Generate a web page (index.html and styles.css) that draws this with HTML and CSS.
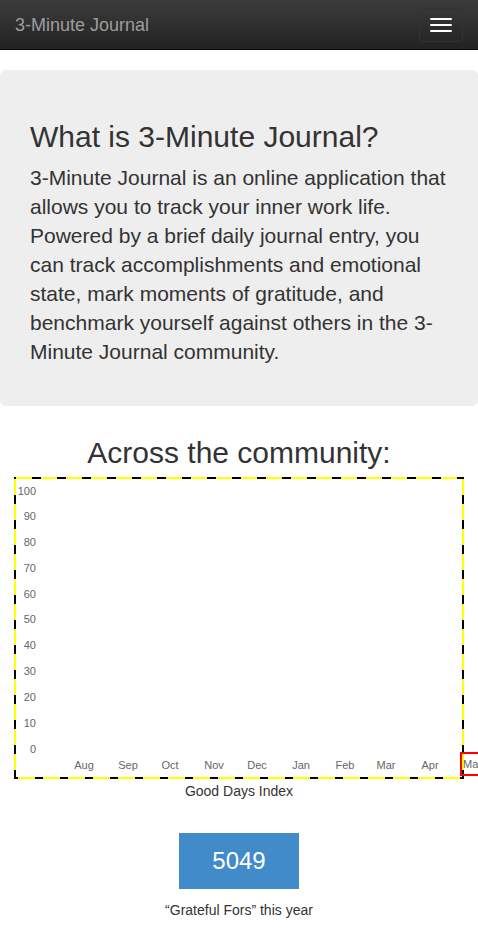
FILE: index.html
```html
<!DOCTYPE html>
<html>
<head>
<meta charset="utf-8">
<link rel="stylesheet" href="styles.css">
</head>
<body>
<nav class="navbar">
  <span class="brand">3-Minute Journal</span>
  <button class="toggle"><span class="bar"></span><span class="bar"></span><span class="bar"></span></button>
</nav>
<section class="jumbotron">
  <h1 class="jt-title">What is 3-Minute Journal?</h1>
  <p class="jt-text">3-Minute Journal is an online application that allows you to track your inner work life. Powered by a brief daily journal entry, you can track accomplishments and emotional state, mark moments of gratitude, and benchmark yourself against others in the 3-Minute Journal community.</p>
</section>
<h2 class="section-title">Across the community:</h2>
<div class="chart-wrap">
  <div class="chart">
    <svg class="chart-svg" width="446" height="298" viewBox="0 0 446 298">
      <g class="ylab" text-anchor="end">
        <text x="20" y="16">100</text>
        <text x="20" y="41">90</text>
        <text x="20" y="67">80</text>
        <text x="20" y="93">70</text>
        <text x="20" y="119">60</text>
        <text x="20" y="144">50</text>
        <text x="20" y="170">40</text>
        <text x="20" y="196">30</text>
        <text x="20" y="222">20</text>
        <text x="20" y="248">10</text>
        <text x="20" y="274">0</text>
      </g>
      <g class="xlab" text-anchor="middle">
        <text x="68" y="290">Aug</text>
        <text x="112" y="290">Sep</text>
        <text x="154" y="290">Oct</text>
        <text x="198" y="290">Nov</text>
        <text x="241" y="290">Dec</text>
        <text x="285" y="290">Jan</text>
        <text x="329" y="290">Feb</text>
        <text x="370" y="290">Mar</text>
        <text x="414" y="290">Apr</text>
      </g>
    </svg>
    <div class="hl-label">May</div>
  </div>
  <div class="chart-caption">Good Days Index</div>
</div>
<div class="stat">
  <div class="stat-box">5049</div>
  <div class="stat-caption">“Grateful Fors” this year</div>
</div>
</body>
</html>
```
FILE: styles.css
```css
html, body {
  margin: 0;
  padding: 0;
}
body {
  font-family: "Liberation Sans", Arial, sans-serif;
  color: #333;
  background: #fff;
  overflow-x: hidden;
  width: 478px;
}
.navbar {
  height: 49px;
  border-bottom: 1px solid #080808;
  background: linear-gradient(to bottom, #3c3c3c 0%, #222 100%);
  display: flex;
  align-items: center;
  justify-content: space-between;
  padding: 0 15px;
  box-sizing: content-box;
}
.brand {
  font-size: 18px;
  line-height: 20px;
  color: #9d9d9d;
}
.toggle {
  width: 44px;
  height: 34px;
  border: 1px solid #333;
  border-radius: 4px;
  background: transparent;
  display: flex;
  flex-direction: column;
  justify-content: center;
  align-items: center;
  gap: 4px;
  padding: 0;
  margin: 0;
}
.bar {
  display: block;
  width: 22px;
  height: 2px;
  border-radius: 1px;
  background: #fff;
}
.jumbotron {
  margin-top: 20px;
  background: #eee;
  border-radius: 6px;
  padding: 30px;
}
.jt-title {
  margin: 20px 0 10px;
  font-size: 30px;
  line-height: 33px;
  font-weight: 400;
  color: #333;
}
.jt-text {
  margin: 0 0 10px;
  font-size: 21px;
  line-height: 29px;
  font-weight: 400;
  color: #333;
}
.section-title {
  margin: 30px 0 8px;
  font-size: 30px;
  line-height: 33px;
  font-weight: 400;
  text-align: center;
  color: #333;
}
.chart-wrap {
  display: flex;
  flex-direction: column;
  align-items: center;
}
.chart {
  position: relative;
  width: 446px;
  height: 298px;
  margin-left: 14px;
  margin-right: 14px;
  align-self: flex-start;
  padding: 2px;
  background:
    repeating-linear-gradient(90deg, #000 0 2px, #ff0 2px 18px, #000 18px 25px) top left / 100% 2px no-repeat,
    repeating-linear-gradient(180deg, #000 0 2px, #ff0 2px 18px, #000 18px 25px) top left / 2px 100% no-repeat,
    repeating-linear-gradient(180deg, #000 0 2px, #ff0 2px 18px, #000 18px 25px) top right / 2px 100% no-repeat,
    #fff;
}
.chart::after {
  content: "";
  position: absolute;
  left: 0;
  right: 0;
  bottom: 0;
  height: 2px;
  background: repeating-linear-gradient(90deg, #000 0 4px, #ff0 4px 21px, #000 21px 25px);
}
.chart-svg {
  display: block;
  overflow: visible;
}
.ylab text, .xlab text {
  font-family: "Liberation Sans", Arial, sans-serif;
  font-size: 11px;
  fill: #666;
}
.hl-label {
  position: absolute;
  left: 446px;
  top: 275px;
  width: 30px;
  height: 20px;
  border: 2px solid #f00;
  font-size: 11px;
  line-height: 20px;
  color: #666;
  padding-left: 1px;
}
.chart-caption {
  margin-top: 2px;
  font-size: 14px;
  line-height: 20px;
  text-align: center;
  color: #333;
}
.stat {
  display: flex;
  flex-direction: column;
  align-items: center;
  margin-top: 32px;
}
.stat-box {
  width: 120px;
  height: 56px;
  background: #428bca;
  color: #fff;
  font-size: 24px;
  line-height: 56px;
  text-align: center;
}
.stat-caption {
  margin-top: 11px;
  font-size: 14px;
  line-height: 20px;
  color: #333;
}
```
